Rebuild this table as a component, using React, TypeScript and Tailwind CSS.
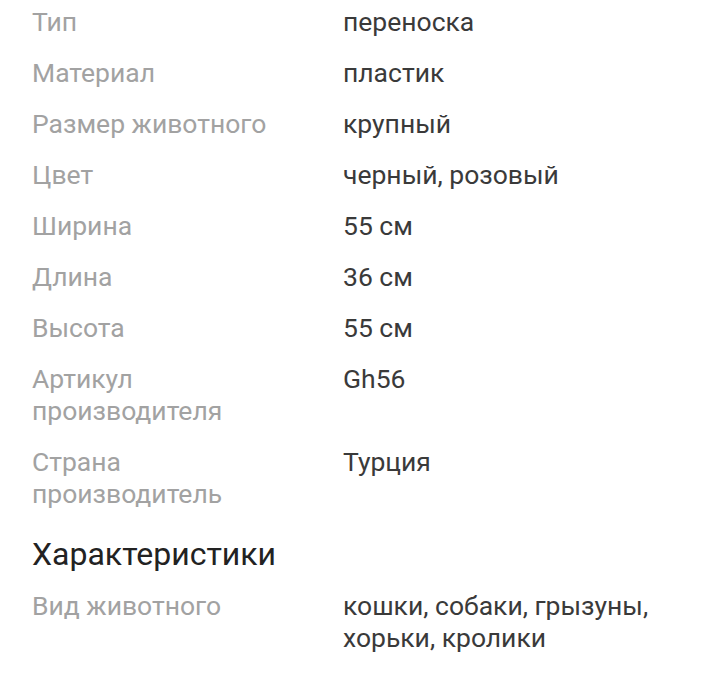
const rows: [string, string][] = [
  ["Тип", "переноска"],
  ["Материал", "пластик"],
  ["Размер животного", "крупный"],
  ["Цвет", "черный, розовый"],
  ["Ширина", "55 см"],
  ["Длина", "36 см"],
  ["Высота", "55 см"],
  ["Артикул производителя", "Gh56"],
  ["Страна производитель", "Турция"],
];

function Row({ label, value }: { label: string; value: string }) {
  return (
    <div className="grid grid-cols-[311px_1fr]">
      <div className="text-[#a2a2a2] pr-[70px]">{label}</div>
      <div className="text-[#3a3a3a]">{value}</div>
    </div>
  );
}

export default function App() {
  return (
    <div
      className="bg-white w-[715px] h-[699px] overflow-hidden pl-8 pr-8 pt-[6px] text-[26.5px] leading-[32px]"
      style={{ fontFamily: "Roboto, 'Noto Sans', sans-serif" }}
    >
      <div className="flex flex-col gap-[19px]">
        {rows.map(([l, v]) => (
          <Row key={l} label={l} value={v} />
        ))}
      </div>
      <h2 className="text-[32px] leading-[40px] text-[#222222] mt-[24px] mb-[16px]">Характеристики</h2>
      <Row label="Вид животного" value="кошки, собаки, грызуны, хорьки, кролики" />
    </div>
  );
}
